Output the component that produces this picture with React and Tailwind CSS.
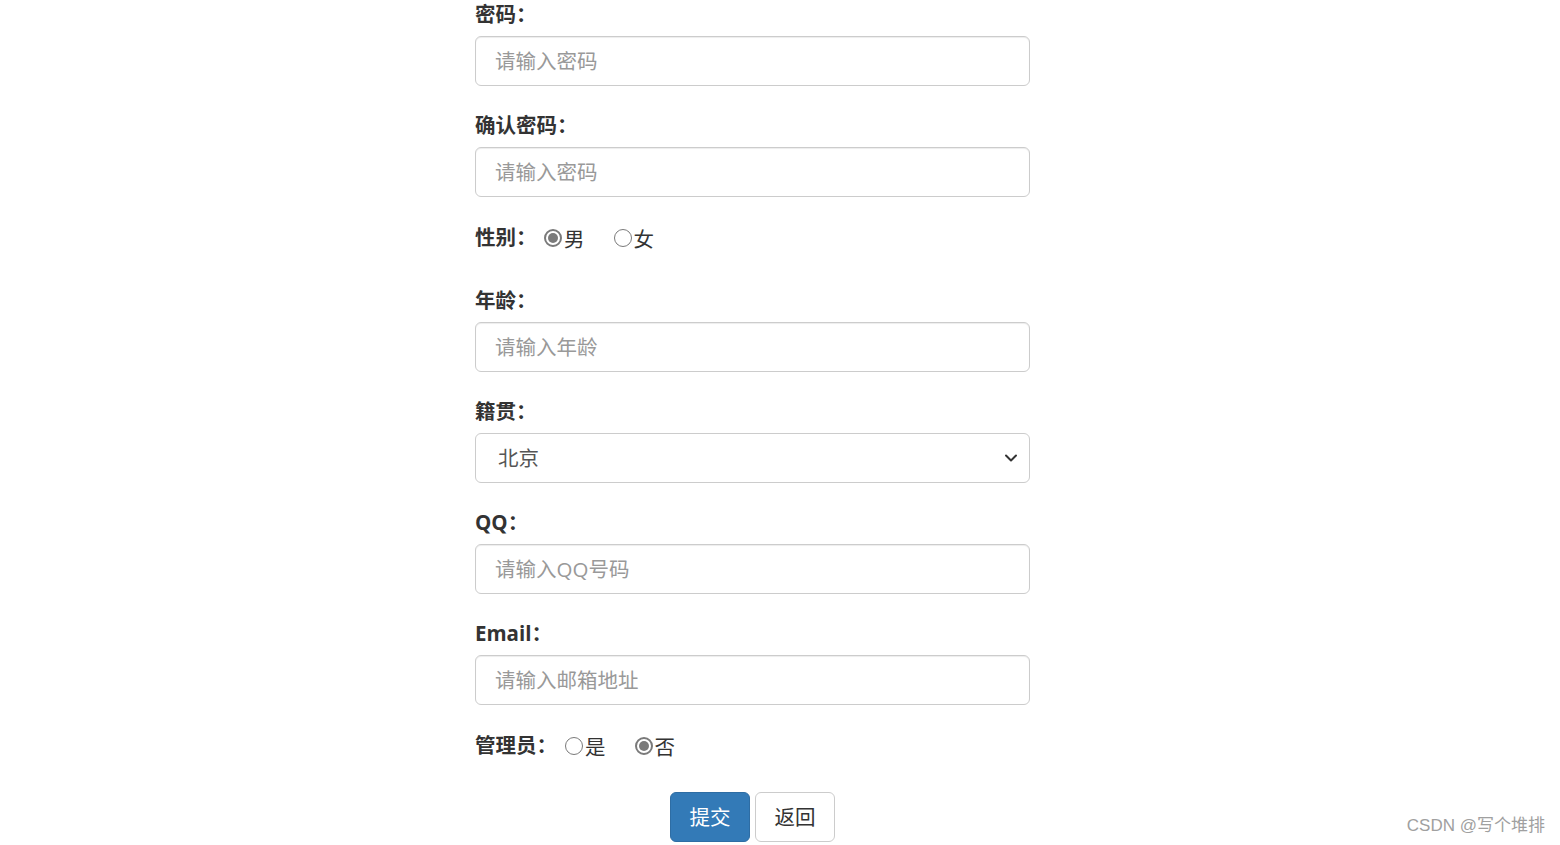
import React from 'react';

const font = { fontFamily: '"Open Sans", "Noto Sans CJK SC", sans-serif' };

const Label = ({ children }) => (
  <label className="block h-[29px] mb-[7px] text-[20.5px] leading-[29px] font-bold text-[#333]">{children}</label>
);

const TextInput = ({ placeholder }) => (
  <input
    type="text"
    placeholder={placeholder}
    className="block w-full h-[50px] px-[19px] text-[20.5px] text-[#555] bg-white border border-[#ccc] rounded-[6px] shadow-[inset_0_1px_1px_rgba(0,0,0,0.075)] outline-none placeholder:text-[#999]"
  />
);

const Radio = ({ checked, label }) => (
  <span className="flex items-center">
    <span
      className={
        checked
          ? 'w-[18px] h-[18px] rounded-full border-[2px] border-[#7a7a7a] bg-white flex items-center justify-center'
          : 'w-[18px] h-[18px] rounded-full border-[1.5px] border-[#7a7a7a] bg-white'
      }
    >
      {checked && <span className="w-[10px] h-[10px] rounded-full bg-[#7a7a7a]" />}
    </span>
    <span className="ml-[2px] text-[20.5px] leading-[29px] text-[#333] pt-[4px]">{label}</span>
  </span>
);

const Group = ({ children }) => <div className="mb-[25px]">{children}</div>;

export default function App() {
  return (
    <div className="relative w-full h-[845px] bg-white overflow-hidden" style={font}>
      <form className="ml-[475px] w-[555px]">
        <Group>
          <Label>密码：</Label>
          <TextInput placeholder="请输入密码" />
        </Group>
        <Group>
          <Label>确认密码：</Label>
          <TextInput placeholder="请输入密码" />
        </Group>
        <div className="h-[39px] mb-[25px] flex items-start pt-[1px]">
          <span className="text-[20.5px] leading-[29px] font-bold text-[#333] w-[69px]">性别：</span>
          <div className="flex items-center gap-[29px] h-[29px]">
            <Radio checked label="男" />
            <Radio label="女" />
          </div>
        </div>
        <Group>
          <Label>年龄：</Label>
          <TextInput placeholder="请输入年龄" />
        </Group>
        <Group>
          <Label>籍贯：</Label>
          <div className="relative">
            <select className="block w-full h-[50px] pl-[22px] pr-[40px] text-[20.5px] text-[#555] bg-white border border-[#ccc] rounded-[6px] appearance-none outline-none">
              <option>北京</option>
              <option>上海</option>
              <option>广州</option>
            </select>
            <svg
              className="absolute right-[12px] top-[20px] pointer-events-none"
              width="14"
              height="10"
              viewBox="0 0 14 10"
              fill="none"
            >
              <path d="M2 2.5 L7 7.5 L12 2.5" stroke="#333" strokeWidth="2" strokeLinecap="round" strokeLinejoin="round" />
            </svg>
          </div>
        </Group>
        <Group>
          <Label>QQ：</Label>
          <TextInput placeholder="请输入QQ号码" />
        </Group>
        <Group>
          <Label>Email：</Label>
          <TextInput placeholder="请输入邮箱地址" />
        </Group>
        <div className="h-[37px] mb-[25px] flex items-start pt-[1px]">
          <span className="text-[20.5px] leading-[29px] font-bold text-[#333] w-[90px]">管理员：</span>
          <div className="flex items-center gap-[29px] h-[29px]">
            <Radio label="是" />
            <Radio checked label="否" />
          </div>
        </div>
        <div className="flex justify-center gap-[5px]">
          <button
            type="button"
            className="w-[80px] h-[50px] text-[20.5px] text-white bg-[#337ab7] border border-[#2e6da4] rounded-[6px]"
          >
            提交
          </button>
          <button
            type="button"
            className="w-[80px] h-[50px] text-[20.5px] text-[#333] bg-white border border-[#ccc] rounded-[6px]"
          >
            返回
          </button>
        </div>
      </form>
      <div
        className="absolute right-[15px] bottom-[7px] text-[17px] text-[#a0a0a0]"
        style={{ fontFamily: '"Liberation Sans", "Noto Sans CJK SC", sans-serif' }}
      >
        CSDN @写个堆排
      </div>
    </div>
  );
}
